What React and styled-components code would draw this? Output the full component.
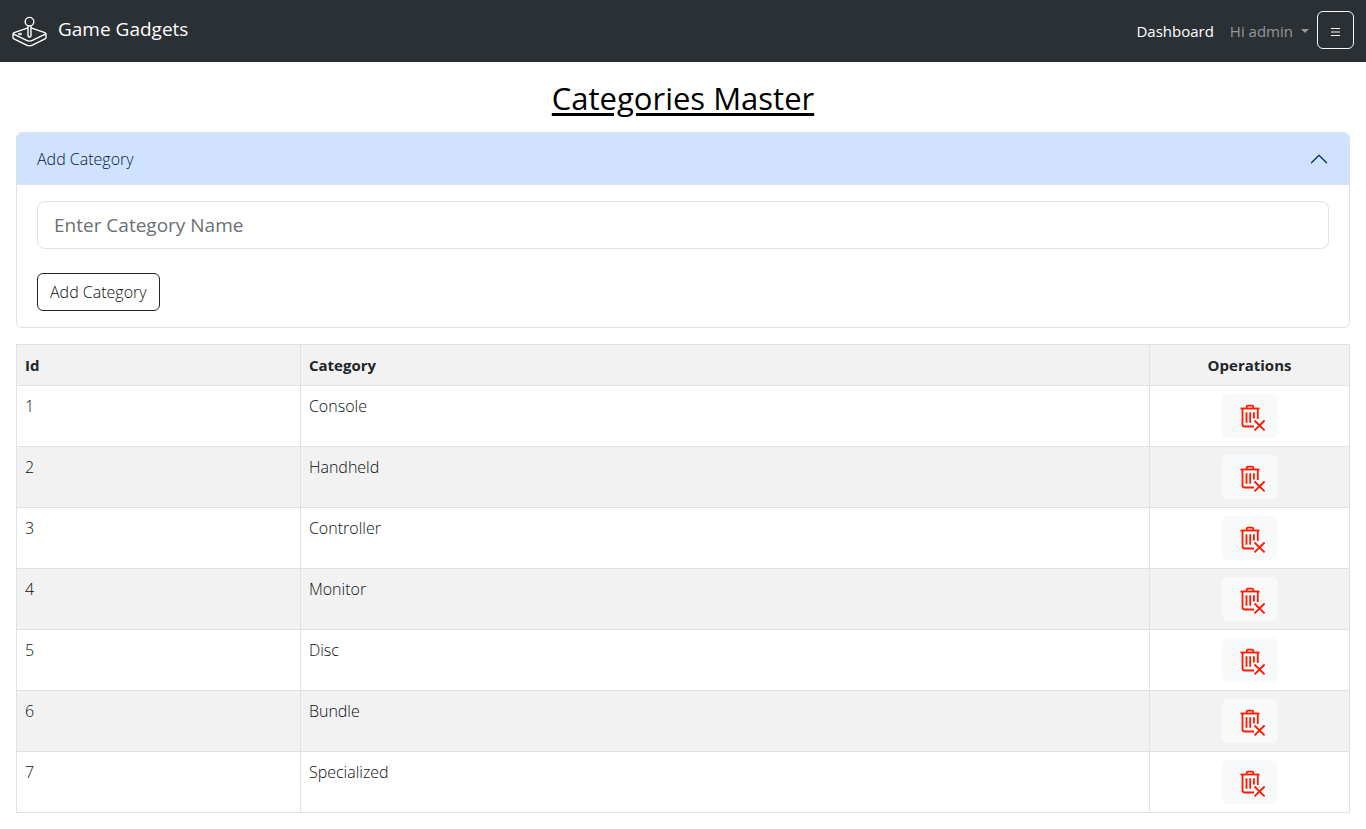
import React, { useState } from "react";
import styled, { createGlobalStyle } from "styled-components";

const GlobalStyle = createGlobalStyle`
  *, *::before, *::after { box-sizing: border-box; }
  body {
    margin: 0;
    background: #fff;
    color: #0c0e10;
    font-family: "Segoe UI", "Open Sans", "Noto Sans", sans-serif;
    font-size: 16px;
    font-weight: 300;
    line-height: 24px;
  }
  button, input { font: inherit; }
`;

const Navbar = styled.nav`
  display: flex;
  align-items: center;
  justify-content: space-between;
  height: 62px;
  padding: 0 12px;
  background: #2b3035;
`;

const Brand = styled.a`
  display: flex;
  align-items: center;
  gap: 10px;
  padding-bottom: 4px;
  color: #fff;
  font-size: 19px;
  font-weight: 400;
  line-height: 30px;
  text-decoration: none;
  svg { margin-top: 4px; }
`;

const NavItems = styled.div`
  display: flex;
  align-items: center;
`;

const NavLink = styled.a`
  display: flex;
  align-items: center;
  gap: 8px;
  padding: 8px;
  color: ${(p) => (p.$active ? "#fff" : "#959799")};
  font-size: 15px;
  font-weight: 400;
  text-decoration: none;
`;

const Caret = styled.span`
  border-top: 4px solid;
  border-left: 4px solid transparent;
  border-right: 4px solid transparent;
`;

const MenuButton = styled.button`
  width: 37px;
  height: 38px;
  margin-bottom: 2px;
  padding: 0;
  border: 1px solid #f8f9fa;
  border-radius: 6px;
  background: transparent;
  color: #f8f9fa;
  svg { display: block; margin: 3px auto 0; }
`;

const Main = styled.main`
  padding: 17px 16px 16px;
`;

const Title = styled.h1`
  margin: 0 0 15px;
  color: #000;
  font-size: 31px;
  font-weight: 500;
  line-height: 38px;
  text-align: center;
  text-decoration: underline;
  text-decoration-thickness: 3px;
  text-underline-offset: 3px;
`;

const Accordion = styled.section`
  margin-bottom: 16px;
  border: 1px solid #dee2e6;
  border-radius: 6px;
  overflow: hidden;
`;

const AccordionToggle = styled.button`
  display: flex;
  align-items: center;
  justify-content: space-between;
  width: 100%;
  height: 52px;
  padding: 0 20px;
  border: 0;
  border-bottom: 1px solid #dee2e6;
  background: #cfe2ff;
  color: #021a42;
  text-align: left;
`;

const CategoryForm = styled.form`
  display: flex;
  flex-direction: column;
  align-items: flex-start;
  gap: 24px;
  padding: 16px 20px;
`;

const NameInput = styled.input`
  width: 100%;
  height: 48px;
  padding: 8px 16px;
  border: 1px solid #dee2e6;
  border-radius: 8px;
  background: #fff;
  color: #212529;
  font-size: 19px;
  font-weight: 400;
  &::placeholder { color: #6b6f74; opacity: 1; }
`;

const SubmitButton = styled.button`
  height: 38px;
  padding: 0 12px;
  border: 1px solid #212529;
  border-radius: 6px;
  background: #fff;
  color: #0c0e10;
`;

const Table = styled.table`
  width: 100%;
  border-collapse: collapse;
  table-layout: fixed;
`;

const HeadCell = styled.th`
  width: ${(p) => p.$width || "auto"};
  height: 41px;
  padding: 8px;
  border: 1px solid #dee2e6;
  background: #f2f2f2;
  color: #212529;
  font-size: 15px;
  font-weight: 700;
  text-align: ${(p) => p.$align || "left"};
`;

const Row = styled.tr`
  background: #fff;
  &:nth-child(even) { background: #f2f2f2; }
`;

const Cell = styled.td`
  height: 61px;
  padding: 8px;
  border: 1px solid #dee2e6;
  text-align: ${(p) => p.$align || "left"};
  vertical-align: top;
`;

const DeleteButton = styled.button`
  display: block;
  margin: 0 auto;
  padding: 6px 12px;
  border: 0;
  border-radius: 6px;
  background: #f8f9fa;
  color: #ff1a00;
  svg { display: block; }
`;

const JoystickIcon = () => (
  <svg width="36" height="36" viewBox="0 0 36 36" fill="none" stroke="#fff" strokeWidth="1.4" strokeLinejoin="round" aria-hidden="true">
    <circle cx="17.5" cy="8.7" r="4.3" />
    <path d="M16 13V22.5a1.5 1.5 0 0 0 3 0V13" />
    <path d="M16 14.8L2.2 19.6Q.4 20.4 2.2 21.4L14.6 27.4Q17.5 28.8 20.4 27.4L32.8 21.4Q34.6 20.4 32.8 19.6L19 14.8" />
    <path d="M1 20.4V24.8Q1 25.4 2 25.9L14.6 32.1Q17.5 33.5 20.4 32.1L33 25.9Q34 25.4 34 24.8V20.4" />
    <ellipse cx="8" cy="21" rx="1.9" ry=".8" fill="#fff" strokeWidth=".6" />
  </svg>
);

const MenuIcon = () => (
  <svg width="9" height="8" viewBox="0 0 9 8" stroke="currentColor" aria-hidden="true">
    <path d="M0 .5H9M0 4H9M0 7.5H9" />
  </svg>
);

const ChevronIcon = ({ open }) => (
  <svg width="20" height="20" viewBox="0 0 16 16" fill="none" stroke="#052c65" strokeLinecap="round" strokeLinejoin="round" aria-hidden="true">
    <path d={open ? "M2 11L8 5L14 11" : "M2 5L8 11L14 5"} />
  </svg>
);

const TrashIcon = () => (
  <svg width="32" height="32" viewBox="0 0 32 32" fill="none" stroke="currentColor" strokeWidth="1.8" aria-hidden="true">
    <path d="M6.5 8.5H25.5" />
    <path d="M12.7 8V6.7Q12.7 5.6 13.8 5.6H18.2Q19.3 5.6 19.3 6.7V8" />
    <path d="M8.5 9V24.2Q8.5 26.5 10.8 26.5H20" />
    <path d="M23.8 9V19" />
    <path d="M12.5 12.2V22.8M16.2 12.2V22.8M19.9 12.2V18.5" />
    <path d="M20.5 20.5L30.6 30.3M30.6 20.5L20.5 30.3" />
  </svg>
);

const categories = ["Console", "Handheld", "Controller", "Monitor", "Disc", "Bundle", "Specialized"];

export default function App() {
  const [open, setOpen] = useState(true);
  return (
    <>
      <GlobalStyle />
      <Navbar>
        <Brand href="#home"><JoystickIcon />Game Gadgets</Brand>
        <NavItems>
          <NavLink href="#dashboard" $active>Dashboard</NavLink>
          <NavLink href="#account">Hi admin<Caret /></NavLink>
          <MenuButton type="button" aria-label="Open menu"><MenuIcon /></MenuButton>
        </NavItems>
      </Navbar>
      <Main>
        <Title>Categories Master</Title>
        <Accordion>
          <AccordionToggle type="button" aria-expanded={open} onClick={() => setOpen(!open)}>
            Add Category
            <ChevronIcon open={open} />
          </AccordionToggle>
          {open && (
            <CategoryForm onSubmit={(e) => e.preventDefault()}>
              <NameInput type="text" aria-label="Category name" placeholder="Enter Category Name" />
              <SubmitButton type="submit">Add Category</SubmitButton>
            </CategoryForm>
          )}
        </Accordion>
        <Table>
          <thead>
            <tr>
              <HeadCell scope="col" $width="21.3%">Id</HeadCell>
              <HeadCell scope="col">Category</HeadCell>
              <HeadCell scope="col" $width="15%" $align="center">Operations</HeadCell>
            </tr>
          </thead>
          <tbody>
            {categories.map((name, i) => (
              <Row key={name}>
                <Cell>{i + 1}</Cell>
                <Cell>{name}</Cell>
                <Cell $align="center">
                  <DeleteButton type="button" aria-label={`Delete ${name}`}><TrashIcon /></DeleteButton>
                </Cell>
              </Row>
            ))}
          </tbody>
        </Table>
      </Main>
    </>
  );
}
